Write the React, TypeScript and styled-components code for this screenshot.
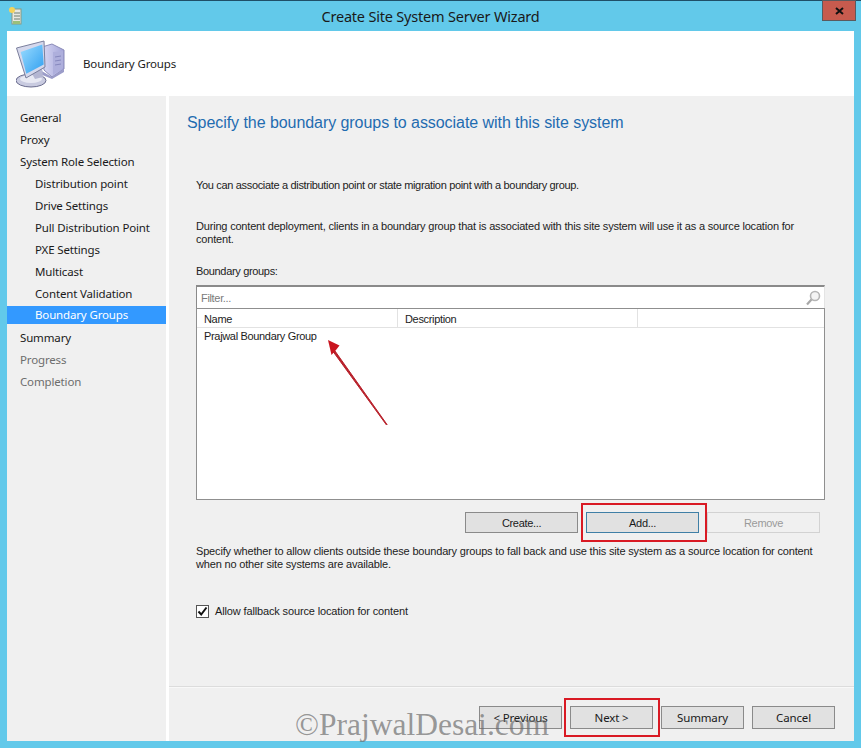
import React from "react";
import styled, { createGlobalStyle } from "styled-components";

const GlobalStyle = createGlobalStyle`
  html, body { margin: 0; padding: 0; background: #62c9ea; }
  body { font-family: "Noto Sans", "Open Sans", sans-serif; font-size: 11.5px; letter-spacing: -0.15px; color: #1c1c1c; }
`;

const Window = styled.div`
  position: relative;
  width: 861px;
  height: 748px;
  overflow: hidden;
  background: #62c9ea;
  display: flex;
  flex-direction: column;
`;

const TitleBar = styled.div`
  position: relative;
  height: 30px;
  flex: none;
  border-top: 1px solid #1f4f68;
  display: flex;
  align-items: center;
  justify-content: center;
`;

const TitleText = styled.div`
  font-size: 14.5px;
  color: #1a1a1a;
  letter-spacing: -0.2px;
`;

const AppIcon = styled.svg`
  position: absolute;
  left: 9px;
  top: 6px;
`;

const CloseButton = styled.div`
  position: absolute;
  right: 5px;
  top: -1px;
  width: 34px;
  height: 21px;
  background: #c75b4e;
  border: 1px solid #5b5a5e;
  box-sizing: border-box;
  display: flex;
  align-items: center;
  justify-content: center;
`;

const Content = styled.div`
  flex: 1;
  margin: 0 7px 7px 7px;
  background: #fff;
  display: flex;
  flex-direction: column;
  min-height: 0;
`;

const Header = styled.div`
  height: 65px;
  flex: none;
  display: flex;
  align-items: center;
  padding-left: 9px;
  gap: 17px;
`;

const Columns = styled.div`
  flex: 1;
  display: flex;
  gap: 3px;
  min-height: 0;
`;

const Sidebar = styled.div`
  width: 159px;
  flex: none;
  background: #f0f0f0;
  padding-top: 12px;
  box-sizing: border-box;
`;

const NavItem = styled.div<{ $sub?: boolean; $active?: boolean; $muted?: boolean }>`
  padding-left: ${(p) => (p.$sub ? 28 : 13)}px;
  background: ${(p) => (p.$active ? "#3399ff" : "transparent")};
  color: ${(p) => (p.$active ? "#fff" : p.$muted ? "#6d6d6d" : "#1a1a1a")};
  height: ${(p) => (p.$active ? 18 : 22)}px;
  line-height: ${(p) => (p.$active ? 18 : 20)}px;
  margin-bottom: ${(p) => (p.$active ? 4 : 0)}px;
`;

const Main = styled.div`
  flex: 1;
  background: #f0f0f0;
  display: flex;
  flex-direction: column;
  min-width: 0;
`;

const Body = styled.div`
  flex: 1;
  display: flex;
  flex-direction: column;
  padding: 0 29px 0 27px;
  font-family: "Liberation Sans", Arial, sans-serif;
  font-size: 11px;
  letter-spacing: -0.33px;
  min-height: 0;
`;

const Heading = styled.div`
  margin: 17px 0 0 -9px;
  height: 20px;
  line-height: 20px;
  font-size: 16px;
  letter-spacing: -0.06px;
  color: #1f6cb0;
`;

const Para = styled.div<{ $top: number; $track?: number }>`
  margin-top: ${(p) => p.$top}px;
  line-height: 13px;
  color: #222;
  white-space: nowrap;
  letter-spacing: ${(p) => p.$track ?? -0.33}px;
`;

const FilterBox = styled.div`
  margin-top: 7px;
  height: 23px;
  box-sizing: border-box;
  background: #fff;
  border-top: 2px solid #8a8a8a;
  border-left: 1px solid #8a8a8a;
  border-right: 1px solid #e4e4e4;
  display: flex;
  align-items: center;
  justify-content: space-between;
  padding: 0 3px 0 4px;
  color: #7a7a7a;
`;

const ListBox = styled.div`
  height: 192px;
  box-sizing: border-box;
  background: #fff;
  border: 1px solid #8f8f8f;
  display: flex;
  flex-direction: column;
`;

const ListHead = styled.div`
  height: 18px;
  flex: none;
  display: flex;
  border-bottom: 1px solid #e2e2e2;
`;

const HeadCell = styled.div<{ $w: number }>`
  width: ${(p) => p.$w}px;
  box-sizing: border-box;
  padding: 2px 0 0 7px;
  line-height: 17px;
  border-right: 1px solid #e2e2e2;
`;

const ListRow = styled.div`
  padding: 1px 0 0 7px;
  line-height: 15px;
`;

const ActionRow = styled.div`
  margin-top: 12px;
  display: flex;
  justify-content: flex-end;
  gap: 8px;
  padding-right: 5px;
`;

const Btn = styled.div<{ $w: number; $disabled?: boolean; $focus?: boolean }>`
  width: ${(p) => p.$w}px;
  height: 21px;
  box-sizing: border-box;
  display: flex;
  align-items: center;
  justify-content: center;
  background: ${(p) => (p.$disabled ? "#f0f0f0" : "#e1e1e1")};
  border: 1px solid ${(p) => (p.$disabled ? "#d2d2d2" : p.$focus ? "#3f7fa6" : "#8a8a8a")};
  color: ${(p) => (p.$disabled ? "#9a9a9a" : "#1a1a1a")};
`;

const CheckRow = styled.div`
  margin-top: 34px;
  display: flex;
  align-items: center;
  gap: 6px;
  line-height: 13px;
  letter-spacing: -0.14px;
`;

const CheckBox = styled.div`
  width: 13px;
  height: 13px;
  box-sizing: border-box;
  background: #fff;
  border: 1px solid #555;
  display: flex;
  align-items: center;
  justify-content: center;
`;

const Footer = styled.div`
  height: 55px;
  flex: none;
  border-top: 1px solid #dcdcdc;
  box-shadow: inset 0 1px 0 #f8f8f8;
  display: flex;
  justify-content: flex-end;
  align-items: flex-start;
  padding: 19px 19px 0 0;
  gap: 8px;
  box-sizing: border-box;
`;

const FooterBtn = styled(Btn)`
  height: 23px;
`;

const RedBox = styled.div<{ $l: number; $t: number; $w: number; $h: number }>`
  position: absolute;
  left: ${(p) => p.$l}px;
  top: ${(p) => p.$t}px;
  width: ${(p) => p.$w}px;
  height: ${(p) => p.$h}px;
  box-sizing: border-box;
  border: 2px solid #d91a24;
  pointer-events: none;
`;

const Arrow = styled.svg`
  position: absolute;
  left: 320px;
  top: 330px;
`;

const Watermark = styled.div`
  position: absolute;
  left: 295px;
  top: 703px;
  font-family: "Liberation Serif", serif;
  font-size: 31.5px;
  line-height: 44px;
  letter-spacing: 0;
  color: rgba(105, 105, 105, 0.68);
  white-space: nowrap;
  pointer-events: none;
`;

const nav: { label: string; sub?: boolean; active?: boolean; muted?: boolean }[] = [
  { label: "General" },
  { label: "Proxy" },
  { label: "System Role Selection" },
  { label: "Distribution point", sub: true },
  { label: "Drive Settings", sub: true },
  { label: "Pull Distribution Point", sub: true },
  { label: "PXE Settings", sub: true },
  { label: "Multicast", sub: true },
  { label: "Content Validation", sub: true },
  { label: "Boundary Groups", sub: true, active: true },
  { label: "Summary" },
  { label: "Progress", muted: true },
  { label: "Completion", muted: true },
];

function ComputerIcon() {
  return (
    <svg width="50" height="48" viewBox="0 0 50 48">
      <defs>
        <linearGradient id="scr" x1="0" y1="0" x2="1" y2="1">
          <stop offset="0" stopColor="#9bdcff" />
          <stop offset="1" stopColor="#2f9ff0" />
        </linearGradient>
        <linearGradient id="twr" x1="0" y1="0" x2="1" y2="0">
          <stop offset="0" stopColor="#d9d9f4" />
          <stop offset="1" stopColor="#a3a4d8" />
        </linearGradient>
      </defs>
      <path d="M26 7 L36 4 L48 10 L48 29 L36 37 L28 30 Z" fill="url(#twr)" stroke="#8a8bb8" />
      <path d="M37 12 L47 11 L47 28 L37 35 Z" fill="#aeafdc" />
      <path d="M39 17 L45 16 M39 21 L45 20 M39 25 L45 24" stroke="#8587bd" />
      <path d="M24 30 L36 37 L48 29 L48 32 L36 39 L24 34 Z" fill="#9b9cc9" />
      <ellipse cx="15" cy="40.5" rx="15" ry="6.5" fill="#c9cbe0" stroke="#6a6c8e" />
      <ellipse cx="15" cy="39" rx="11" ry="4" fill="#e8e9f3" />
      <path d="M15 32 L26 27 L27 37 L19 39 Z" fill="#b4b6d2" />
      <path d="M0.5 8 L28 1 L29 27 L10 38 Z" fill="#d5d8ec" stroke="#7b7f9c" />
      <path d="M4.7 12 L26.3 4.5 L27.7 24.5 L10.3 33.7 Z" fill="url(#scr)" />
    </svg>
  );
}

export default function App() {
  return (
    <Window>
      <GlobalStyle />
      <TitleBar>
        <AppIcon width="13" height="18" viewBox="0 0 13 18">
          <rect x="3" y="2" width="9" height="15" fill="#e8e8e0" stroke="#8a9a80" />
          <path d="M5 6h6M5 9h6M5 12h6" stroke="#6f7f70" />
          <rect x="4" y="14" width="7" height="3" fill="#9bbf7a" />
          <circle cx="3" cy="3" r="3" fill="#f3d35a" />
        </AppIcon>
        <TitleText>Create Site System Server Wizard</TitleText>
        <CloseButton>
          <svg width="9" height="8" viewBox="0 0 9 8">
            <path d="M1 1 L8 7 M8 1 L1 7" stroke="#111" strokeWidth="2" />
          </svg>
        </CloseButton>
      </TitleBar>
      <Content>
        <Header>
          <ComputerIcon />
          <span>Boundary Groups</span>
        </Header>
        <Columns>
          <Sidebar>
            {nav.map((n) => (
              <NavItem key={n.label} $sub={n.sub} $active={n.active} $muted={n.muted}>
                {n.label}
              </NavItem>
            ))}
          </Sidebar>
          <Main>
            <Body>
              <Heading>Specify the boundary groups to associate with this site system</Heading>
              <Para $top={46}>You can associate a distribution point or state migration point with a boundary group.</Para>
              <Para $top={28} $track={-0.19}>
                During content deployment, clients in a boundary group that is associated with this site system will use it as a source location for
                <br />
                content.
              </Para>
              <Para $top={19}>Boundary groups:</Para>
              <FilterBox>
                <span>Filter...</span>
                <svg width="16" height="16" viewBox="0 0 16 16">
                  <circle cx="10" cy="6" r="4.5" fill="#f4f4f4" stroke="#b5b5b5" strokeWidth="1.6" />
                  <path d="M6.5 9.5 L2 14.5" stroke="#a8a8a8" strokeWidth="2.2" />
                </svg>
              </FilterBox>
              <ListBox>
                <ListHead>
                  <HeadCell $w={201}>Name</HeadCell>
                  <HeadCell $w={240}>Description</HeadCell>
                </ListHead>
                <ListRow>Prajwal Boundary Group</ListRow>
              </ListBox>
              <ActionRow>
                <Btn $w={113}>Create...</Btn>
                <Btn $w={113} $focus>Add...</Btn>
                <Btn $w={113} $disabled>Remove</Btn>
              </ActionRow>
              <Para $top={12} $track={-0.17}>
                Specify whether to allow clients outside these boundary groups to fall back and use this site system as a source location for content
                <br />
                when no other site systems are available.
              </Para>
              <CheckRow>
                <CheckBox>
                  <svg width="11" height="11" viewBox="0 0 11 11">
                    <path d="M1.5 5.5 L4.2 8.5 L9.5 1.5" fill="none" stroke="#111" strokeWidth="2" />
                  </svg>
                </CheckBox>
                Allow fallback source location for content
              </CheckRow>
            </Body>
            <Footer>
              <FooterBtn $w={83}>&lt; Previous</FooterBtn>
              <FooterBtn $w={83}>Next &gt;</FooterBtn>
              <FooterBtn $w={83}>Summary</FooterBtn>
              <FooterBtn $w={83}>Cancel</FooterBtn>
            </Footer>
          </Main>
        </Columns>
      </Content>
      <Arrow width="80" height="100" viewBox="0 0 80 100">
        <path d="M67 94.5 L15 21 L13.4 22 L66.5 95 Z" fill="#b8202a" stroke="#b8202a" strokeWidth="1" />
        <path d="M8 10 L19.5 15.5 L16 20 L11.5 25 Z" fill="#c9141f" />
      </Arrow>
      <RedBox $l={581} $t={503} $w={126} $h={39} />
      <RedBox $l={564} $t={698} $w={96} $h={39} />
      <Watermark>©PrajwalDesai.com</Watermark>
    </Window>
  );
}
